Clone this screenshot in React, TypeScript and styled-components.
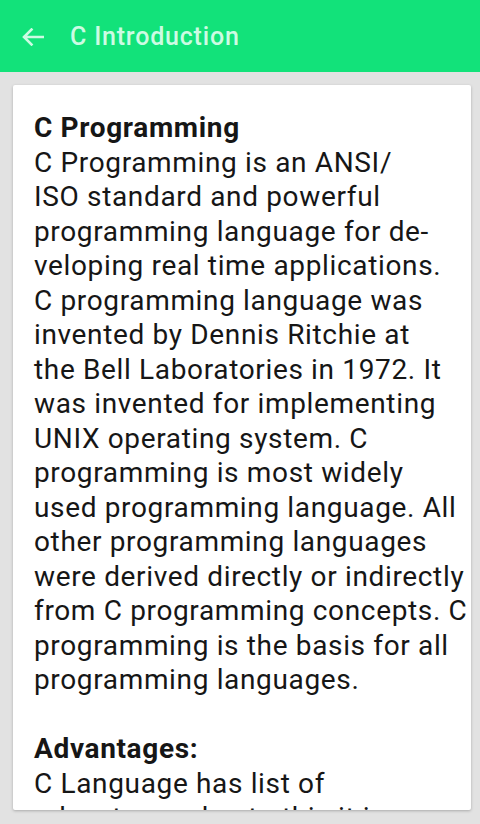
import React from 'react'
import styled, { createGlobalStyle } from 'styled-components'

const GlobalStyle = createGlobalStyle`
  html, body {
    margin: 0;
    padding: 0;
    height: 100%;
    background: #e2e2e2;
    font-family: Roboto, "Noto Sans", sans-serif;
  }
  #root {
    height: 100%;
  }
`

const introLines = [
  'C Programming is an ANSI/',
  'ISO standard and powerful',
  'programming language for de-',
  'veloping real time applications.',
  'C programming language was',
  'invented by Dennis Ritchie at',
  'the Bell Laboratories in 1972. It',
  'was invented for implementing',
  'UNIX operating system. C',
  'programming is most widely',
  'used programming language. All',
  'other programming languages',
  'were derived directly or indirectly',
  'from C programming concepts. C',
  'programming is the basis for all',
  'programming languages.',
]

const advantageLines = [
  'C Language has list of',
  'advantages due to this it is',
  'widely used language.',
]

function BackArrow() {
  return (
    <svg width="22" height="18" viewBox="0 0 22 18" fill="none">
      <path
        d="M21 9H2.5M9.5 1.5L2 9l7.5 7.5"
        stroke="currentColor"
        strokeWidth="2.6"
        strokeLinecap="square"
      />
    </svg>
  )
}

function App() {
  return (
    <>
      <GlobalStyle />
      <Screen>
        <Toolbar>
          <BackButton>
            <BackArrow />
          </BackButton>
          <Title>C Introduction</Title>
        </Toolbar>

        <Card>
          <Section>
            <Heading>C Programming</Heading>
            {introLines.map((line) => (
              <Line key={line}>{line}</Line>
            ))}
          </Section>

          <Spacer />

          <Section>
            <Heading>Advantages:</Heading>
            {advantageLines.map((line) => (
              <Line key={line}>{line}</Line>
            ))}
          </Section>
        </Card>
      </Screen>
    </>
  )
}

const Screen = styled.div`
  height: 100vh;
  display: flex;
  flex-direction: column;
  overflow: hidden;
`

const Toolbar = styled.header`
  flex: 0 0 72px;
  display: flex;
  align-items: center;
  background-color: #12e27a;
  color: #cdfbe3;
`

const BackButton = styled.div`
  width: 70px;
  display: flex;
  align-items: center;
  padding-left: 22px;
  padding-top: 1px;
  box-sizing: border-box;
`

const Title = styled.h1`
  margin: 0;
  font-size: 25px;
  font-weight: 500;
  letter-spacing: 0.8px;
`

const Card = styled.main`
  flex: 1;
  margin: 13px 9px 14px 13px;
  padding: 26px 8px 0 21px;
  background: #ffffff;
  border-radius: 2px;
  box-shadow: 0 1px 3px rgba(0, 0, 0, 0.25);
  overflow: hidden;
  color: #161616;
`

const Section = styled.section`
  font-size: 28px;
  line-height: 34.5px;
  letter-spacing: 0.65px;
`

const Heading = styled.div`
  font-weight: 700;
`

const Line = styled.div`
  white-space: nowrap;
`

const Spacer = styled.div`
  height: 34.5px;
`

export default App
